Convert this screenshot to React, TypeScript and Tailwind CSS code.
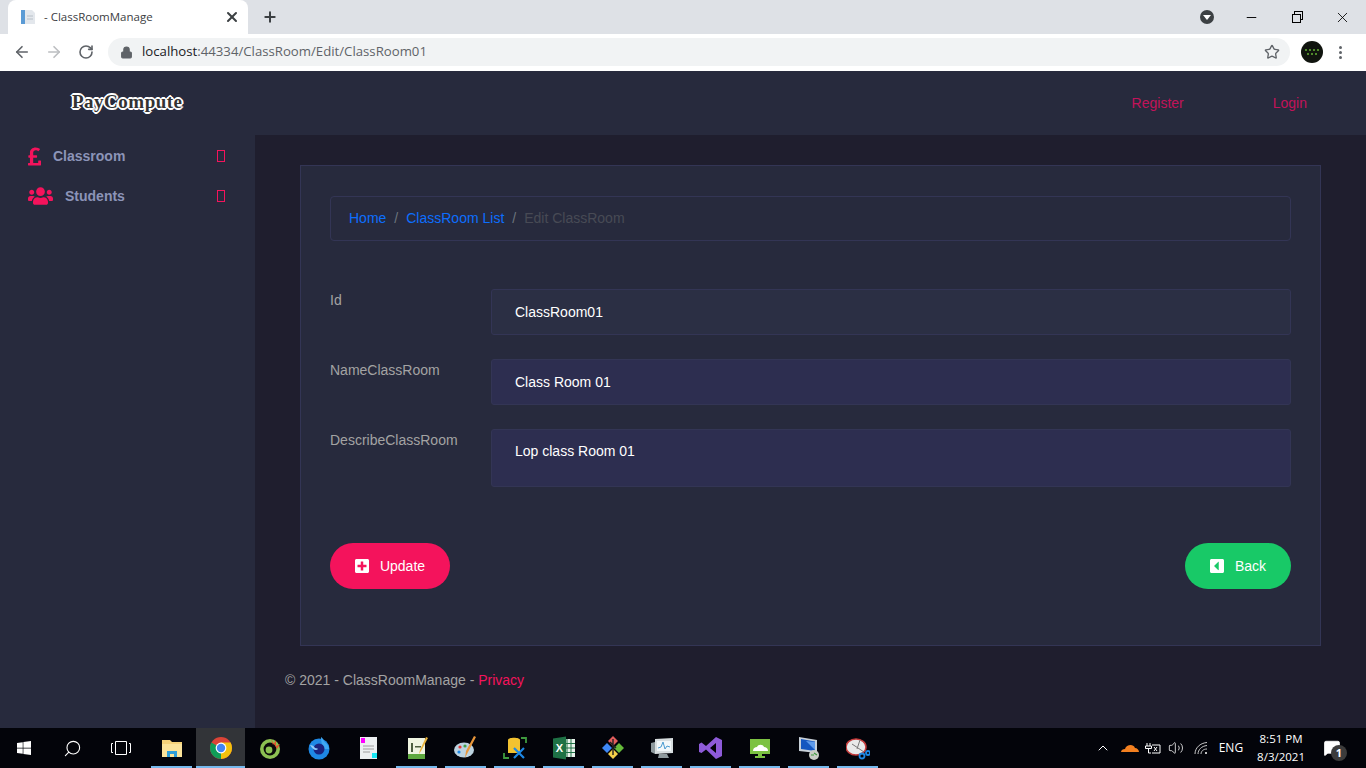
import React from 'react';
import { ArrowLeft, ArrowRight, RotateCw, Lock, Star, X, Plus, Minus, Search, ChevronUp, Volume2, MessageSquare } from 'lucide-react';
import { FaPoundSign, FaUsers, FaPlusSquare, FaCaretSquareLeft, FaWindows } from 'react-icons/fa';

const ChromeIcon = () => (
  <svg width="24" height="24" viewBox="0 0 24 24">
    <circle cx="12" cy="12" r="11" fill="#db4437" />
    <path d="M12 12 L2.4 6.6 A11 11 0 0 0 12 23 Z" fill="#0f9d58" />
    <path d="M12 12 L12 23 A11 11 0 0 0 21.6 6.6 L12 6.6 Z" fill="#f4c20d" />
    <circle cx="12" cy="12" r="5.4" fill="#fff" />
    <circle cx="12" cy="12" r="4.2" fill="#4285f4" />
  </svg>
);

const Explorer = () => (
  <svg width="24" height="24" viewBox="0 0 24 24">
    <path d="M2 4h8l2 2h10v15H2z" fill="#f5d27a" />
    <path d="M2 8h20v13H2z" fill="#fbe39a" />
    <path d="M7 21v-6h10v6h-3v-3h-4v3z" fill="#2f9ed8" />
  </svg>
);

const CocCoc = () => (
  <svg width="24" height="24" viewBox="0 0 24 24">
    <circle cx="12" cy="13" r="10" fill="#8cc152" />
    <circle cx="12" cy="13" r="6.4" fill="#0a0a0a" />
    <circle cx="11" cy="14" r="3.4" fill="#8cc152" />
    <path d="M13 3l2 6 3-5 0 6 4-2-3 5z" fill="#e2552e" />
  </svg>
);

const Firefox = () => (
  <svg width="24" height="24" viewBox="0 0 24 24">
    <circle cx="12" cy="13" r="10.5" fill="#1e88e5" />
    <path d="M14 1c3 2 2 4 5 6 2 2 3 4 3 6h-6c0-3-2-6-2-12z" fill="#3fa9f5" />
    <circle cx="12" cy="13" r="5.5" fill="#1a237e" />
    <path d="M3 9c2 0 4 1 5 3 2 0 3 1 3 1-2 2-5 1-8-4z" fill="#90caf9" />
  </svg>
);

const NotePad = () => (
  <svg width="24" height="24" viewBox="0 0 24 24">
    <path d="M4 1h17v22H4z" fill="#eceff1" />
    <path d="M5 2h4v5H5z" fill="#f0f" />
    <path d="M16 17h5v5h-5z" fill="#19e8f5" />
    <path d="M7 10h11M7 13h11M7 16h7" stroke="#9e9e9e" />
  </svg>
);

const GreenPad = () => (
  <svg width="24" height="24" viewBox="0 0 24 24">
    <path d="M3 2h17v21H3z" fill="#eef3e0" />
    <path d="M3 18h17v5H3z" fill="#5da83e" />
    <path d="M6 7h2v9H6zM10 10h6v1.500h-6z" fill="#4c5d3f" />
    <path d="M23 2l-7 13-2 3 1-4 6-13z" fill="#e8b23a" />
  </svg>
);

const Palette = () => (
  <svg width="24" height="24" viewBox="0 0 24 24">
    <ellipse cx="10" cy="14" rx="10" ry="7.500" fill="#bcd3e0" />
    <circle cx="6" cy="11" r="1.600" fill="#e53935" />
    <circle cx="11" cy="10" r="1.600" fill="#43a047" />
    <circle cx="5" cy="16" r="1.600" fill="#1e88e5" />
    <path d="M22 1l-8 15-3 6 1-7 8-15z" fill="#e8963a" />
  </svg>
);

const DbTools = () => (
  <svg width="24" height="24" viewBox="0 0 24 24" fill="none">
    <path d="M5 4c0-3 12-3 12 0v13H5z" fill="#f2c230" />
    <path d="M1 17v5h5M18 2h5v5" stroke="#3f9b3f" strokeWidth="1.800" />
    <path d="M11 22l10-10M11 12l10 10" stroke="#1e88e5" strokeWidth="2.200" />
  </svg>
);

const Excel = () => (
  <svg width="24" height="24" viewBox="0 0 24 24">
    <path d="M12 3h11v18H12z" fill="#e9f3ec" />
    <path d="M15 3v18M19 3v18M12 7.500h11M12 12h11M12 16.500h11" stroke="#1e7145" />
    <path d="M1 2.500l13-2v23l-13-2z" fill="#1e7145" />
    <text x="7.500" y="16" textAnchor="middle" fontSize="11" fontWeight="700" fill="#fff" fontFamily="Liberation Sans, sans-serif">X</text>
  </svg>
);

const GitDiamonds = () => (
  <svg width="24" height="24" viewBox="0 0 24 24">
    <path d="M6 7l5 5-5 5-5-5z" fill="#3f87f5" />
    <path d="M18 7l5 5-5 5-5-5z" fill="#66bb3a" />
    <path d="M12 0l5 5-5 5-5-5z" fill="#e35d5d" />
    <path d="M12 13l5 5-5 5-5-5z" fill="#f5d04a" />
    <path d="M12 3v16M9 6l6 6" stroke="#222" strokeWidth="1.400" />
  </svg>
);

const Monitor = () => (
  <svg width="24" height="24" viewBox="0 0 24 24">
    <path d="M1 7l4-1v12l-4-2z" fill="#8f9a9e" />
    <path d="M5 3l18-1v15l-18 1z" fill="#d8dee0" />
    <path d="M7 5h14v10H7z" fill="#f2f7f9" />
    <path d="M8 12l3-1 2-5 2 7 2-3 3 1" stroke="#4a9bd1" fill="none" />
    <path d="M9 18h8l2 4H8z" fill="#8f9a9e" />
  </svg>
);

const VisualStudio = () => (
  <svg width="24" height="24" viewBox="0 0 24 24">
    <path d="M17 1l6 3v16l-6 3-10-9.500-4.500 3.500L0 16V8l2.500-1.500L7 10zM17 7l-6 5 6 5z" fill="#8e5bd9" />
  </svg>
);

const GreenCloud = () => (
  <svg width="24" height="24" viewBox="0 0 24 24">
    <path d="M2 3h20v15H2z" fill="#7cc242" />
    <path d="M5 15c0-3 2-4 4-4 1-3 6-3 7 0 2 0 4 1 4 4z" fill="#fff" />
    <path d="M10 18h4v2h3v2H7v-2h3z" fill="#7cc242" />
  </svg>
);

const RemoteDesk = () => (
  <svg width="24" height="24" viewBox="0 0 24 24">
    <path d="M2 1l18 3v13L2 15z" fill="#c8d0d8" />
    <path d="M4 3l14 2.500v9.500L4 13z" fill="#1557c0" />
    <path d="M9 5l9 1v8z" fill="#5f9bea" />
    <circle cx="17" cy="19" r="5" fill="#c9ccc5" />
    <path d="M14 19h3M17 17l3 2" stroke="#3f9b3f" strokeWidth="1.200" />
  </svg>
);

const Snip = () => (
  <svg width="24" height="24" viewBox="0 0 24 24" fill="none">
    <ellipse cx="10" cy="11" rx="10" ry="8" fill="#e9eaea" stroke="#c43b3b" strokeWidth="1.500" />
    <path d="M6 8l12 8M14 4l-3 9" stroke="#777" />
    <circle cx="16" cy="20" r="2.500" stroke="#1e88e5" strokeWidth="1.800" />
    <circle cx="22" cy="17" r="2" stroke="#1e88e5" strokeWidth="1.800" />
  </svg>
);

const taskIcons = [
  { icon: <Explorer />, on: 'wide' },
  { icon: <ChromeIcon />, on: 'active' },
  { icon: <CocCoc />, on: 'none' },
  { icon: <Firefox />, on: 'none' },
  { icon: <NotePad />, on: 'none' },
  { icon: <GreenPad />, on: 'wide' },
  { icon: <Palette />, on: 'wide' },
  { icon: <DbTools />, on: 'wide' },
  { icon: <Excel />, on: 'wide' },
  { icon: <GitDiamonds />, on: 'wide' },
  { icon: <Monitor />, on: 'wide' },
  { icon: <VisualStudio />, on: 'wide' },
  { icon: <GreenCloud />, on: 'wide' },
  { icon: <RemoteDesk />, on: 'wide' },
  { icon: <Snip />, on: 'wide' },
];

const BrowserChrome = () => (
  <div className="shrink-0 font-['Open_Sans',sans-serif]">
    <div className="h-[34px] bg-[#dee1e6] flex items-end pl-2">
      <div className="w-[240px] h-[34px] bg-white rounded-t-lg flex items-center pl-3 pr-2 text-[#3c4043]">
        <svg width="16" height="16" viewBox="0 0 16 16" className="shrink-0">
          <path d="M1 1h4v14H1z" fill="#5b9bd5" />
          <path d="M5 1h7l3 3v11H5z" fill="#e3e7ec" />
          <path d="M7 7h6M7 10h6" stroke="#b8c0c8" />
        </svg>
        <span className="ml-2 text-[11.5px] whitespace-nowrap">- ClassRoomManage</span>
        <X className="ml-auto w-4 h-4 text-[#3c4043]" strokeWidth={3} />
      </div>
      <Plus className="ml-[14px] mb-[9px] w-4 h-4 text-[#3c4043]" strokeWidth={3} />
      <div className="ml-auto h-full flex items-center">
        <div className="w-[14px] h-[14px] rounded-full bg-[#3c4043] flex items-center justify-center mr-[14px]">
          <div className="w-0 h-0 border-x-4 border-x-transparent border-t-[5px] border-t-white" />
        </div>
        <div className="w-[46px] flex justify-center"><Minus className="w-[15px] h-[15px] text-black" strokeWidth={1.500} /></div>
        <div className="w-[45px] flex justify-center relative">
          <div className="w-[9px] h-[9px] border border-black bg-[#dee1e6] translate-y-[1px] z-10" />
          <div className="w-[9px] h-[9px] border border-black absolute top-[-2px] left-[20px]" />
        </div>
        <div className="w-[47px] flex justify-center"><X className="w-[17px] h-[17px] text-black" strokeWidth={1.200} /></div>
      </div>
    </div>
    <div className="h-[37px] bg-white flex items-start pt-1">
      <ArrowLeft className="ml-[13px] mt-[5px] w-[18px] h-[18px] text-[#5f6368]" strokeWidth={2.200} />
      <ArrowRight className="ml-[14px] mt-[5px] w-[18px] h-[18px] text-[#bcbec1]" strokeWidth={2.200} />
      <RotateCw className="ml-[15px] mt-[6px] w-4 h-4 text-[#5f6368]" strokeWidth={2.400} />
      <div className="ml-[14px] w-[1182px] h-7 rounded-full bg-[#f1f3f4] flex items-center pl-3 pr-[10px]">
        <Lock className="w-[13px] h-[13px] text-[#5f6368]" fill="#5f6368" strokeWidth={2} />
        <span className="ml-[9px] text-[13.2px] whitespace-nowrap text-[#5f6368]"><span className="text-[#202124]">localhost</span>:44334/ClassRoom/Edit/ClassRoom01</span>
        <Star className="ml-auto w-4 h-4 text-[#5f6368]" strokeWidth={2} />
      </div>
      <div className="ml-[11px] mt-[3px] w-[22px] h-[22px] rounded-full bg-[#10140e] flex flex-col items-center justify-center gap-[2px]">
        <div className="flex gap-[2px]">{[0, 1, 2, 3].map(i => <span key={i} className="w-[2px] h-[2px] bg-[#4f8a2a]" />)}</div>
        <div className="flex gap-[2px]">{[0, 1, 2].map(i => <span key={i} className="w-[2px] h-[2px] bg-[#4f8a2a]" />)}</div>
      </div>
      <div className="ml-[16px] mt-[8px] flex flex-col gap-[2px]">
        {[0, 1, 2].map(i => <span key={i} className="w-[3px] h-[3px] rounded-full bg-[#5f6368]" />)}
      </div>
    </div>
  </div>
);

const Taskbar = () => (
  <div className="h-10 shrink-0 bg-[#03040a] flex items-stretch text-white font-['Open_Sans',sans-serif]">
    <div className="w-12 flex items-center justify-center"><FaWindows className="w-4 h-4" /></div>
    <div className="w-12 flex items-center justify-center"><Search className="w-[19px] h-[19px] -scale-x-100" strokeWidth={1.400} /></div>
    <div className="w-[51px] flex items-center justify-center">
      <svg width="20" height="14" viewBox="0 0 20 14" fill="none" stroke="#fff" className="-translate-x-[1px]">
        <path d="M4.500 .5h11v13h-11z" />
        <path d="M2 2.500H.5v9H2M18 2.500h1.500v9H18" />
      </svg>
    </div>
    <div className="flex">
      {taskIcons.map((t, i) => (
        <div key={i} className={`w-[49px] flex items-center justify-center relative ${t.on === 'active' ? 'bg-[#323438]' : ''}`}>
          {t.icon}
          {t.on !== 'none' && <div className={`absolute bottom-0 h-[2px] bg-[#76b9ed] ${t.on === 'active' ? 'inset-x-0' : 'inset-x-[4px]'}`} />}
        </div>
      ))}
    </div>
    <div className="ml-auto flex items-center">
      <ChevronUp className="w-4 h-4 mr-[10px]" strokeWidth={1.500} />
      <svg width="18" height="10" viewBox="0 0 18 10" className="mr-[5px]">
        <path d="M0 9c0-2 2-3 4-3 1-4 8-6 10-1 2 0 4 2 4 4z" fill="#f38020" />
      </svg>
      <svg width="17" height="12" viewBox="0 0 17 12" fill="none" stroke="#fff" className="mr-[7px]">
        <path d="M3 1v3M6 1v3M1.500 4h6v2.500h-6zM4.500 6.500V11H7" />
        <path d="M8 3h8v8H8M10 5l3 4M13 5l-3 4" />
      </svg>
      <Volume2 className="w-4 h-4 mr-[10px]" strokeWidth={1.200} />
      <svg width="16" height="14" viewBox="0 0 16 14" fill="none" stroke="#c8c8c8" className="mr-[9px]">
        <path d="M1 13C1 7 6 2 13 1.500M4 13c0-4 3.500-8 9-8.500M7 13c0-2.500 2-5 6-5" />
        <circle cx="12" cy="12" r="1" fill="#fff" stroke="none" />
      </svg>
      <span className="text-xs mr-[14px]">ENG</span>
      <div className="text-[11.5px] leading-[18px] text-center mr-[18px]">
        <div>8:51 PM</div>
        <div>8/3/2021</div>
      </div>
      <div className="relative mr-[25px]">
        <MessageSquare className="w-[18px] h-[18px]" fill="#fff" strokeWidth={1} />
        <div className="absolute left-[8px] top-[6px] w-4 h-4 rounded-full bg-[#3c3c3c] text-[11px] leading-4 text-center font-bold">1</div>
      </div>
    </div>
  </div>
);

const SideItem = ({ icon, label, gap }: { icon: React.ReactNode; label: string; gap: string }) => (
  <div className="h-10 pl-7 pr-[30px] flex items-center">
    <div className={`text-[#f4135c] ${gap}`}>{icon}</div>
    <span className="text-sm font-bold text-[#8c94b8]">{label}</span>
    <div className="ml-auto w-2 h-3 border border-[#f4135c]" />
  </div>
);

const Field = ({ label, value, tall, bg }: { label: string; value: string; tall?: boolean; bg: string }) => (
  <div className="flex mb-6">
    <label className="w-[161px] pt-[1px] text-sm leading-5 text-[#a3a3a3]">{label}</label>
    <div className={`flex-1 px-[23px] rounded-[3px] border border-[#333555] text-sm text-white ${bg} ${tall ? 'h-[58px] pt-[11px]' : 'h-[46px] flex items-center'}`}>
      {value}
    </div>
  </div>
);

export default function App() {
  return (
    <div className="h-screen w-[1366px] overflow-hidden flex flex-col font-['Liberation_Sans',Arial,sans-serif]">
      <BrowserChrome />
      <div className="flex-1 flex flex-col bg-[#272a3d] min-h-0">
        <header className="h-16 shrink-0 flex items-center">
          <span className="ml-[72px] -mt-[3px] text-[19px] font-bold tracking-[0.5px] leading-none text-[#333] font-['Liberation_Serif',serif] [text-shadow:1px_0_0_#fff,-1px_0_0_#fff,0_1px_0_#fff,0_-1px_0_#fff,2px_0_0_#fff,-2px_0_0_#fff,0_2px_0_#fff,0_-2px_0_#fff,1px_1px_0_#fff,-1px_-1px_0_#fff,1px_-1px_0_#fff,-1px_1px_0_#fff]">PayCompute</span>
          <nav className="ml-auto flex text-sm text-[#c2135a]">
            <a className="mr-[89px]">Register</a>
            <a className="mr-[59px]">Login</a>
          </nav>
        </header>
        <div className="flex-1 flex min-h-0">
          <aside className="w-[255px] shrink-0 pt-[1px]">
            <SideItem icon={<FaPoundSign className="w-[13px] h-[21px]" />} label="Classroom" gap="mr-3" />
            <SideItem icon={<FaUsers className="w-[25px] h-5" />} label="Students" gap="mr-3" />
          </aside>
          <main className="flex-1 bg-[#1f1e2e] pt-[30px] pl-[45px] pr-[45px]">
            <div className="h-[481px] border border-[#333555] bg-[#272a3d] px-[29px] py-[30px]">
              <div className="h-[45px] mb-12 border border-[#333555] rounded-[4px] px-[18px] pb-[1px] flex items-center text-sm">
                <a className="text-[#0d6efd]">Home</a>
                <span className="mx-2 text-[#6c757d]">/</span>
                <a className="text-[#0d6efd]">ClassRoom List</a>
                <span className="mx-2 text-[#6c757d]">/</span>
                <span className="text-[#484a55]">Edit ClassRoom</span>
              </div>
              <Field label="Id" value="ClassRoom01" bg="bg-[#2b2f44]" />
              <Field label="NameClassRoom" value="Class Room 01" bg="bg-[#2d2e50]" />
              <Field label="DescribeClassRoom" value="Lop class Room 01" tall bg="bg-[#2d2e50]" />
              <div className="flex justify-between mt-14">
                <button className="w-[120px] h-[46px] rounded-full bg-[#f4135c] text-white text-sm flex items-center justify-center gap-[11px]">
                  <FaPlusSquare className="w-[14px] h-4" />
                  Update
                </button>
                <button className="w-[106px] h-[46px] rounded-full bg-[#18c967] text-white text-sm flex items-center justify-center gap-[11px]">
                  <FaCaretSquareLeft className="w-[14px] h-4" />
                  Back
                </button>
              </div>
            </div>
            <footer className="mt-6 -ml-[15px] text-sm leading-5 text-[#a3a3a3]">
              © 2021 - ClassRoomManage - <a className="text-[#f4135c]">Privacy</a>
            </footer>
          </main>
        </div>
      </div>
      <Taskbar />
    </div>
  );
}
